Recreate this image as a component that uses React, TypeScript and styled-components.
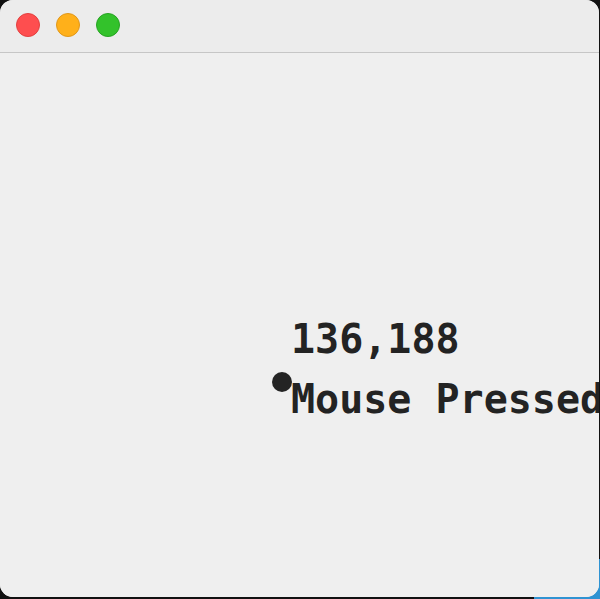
import { FC } from "react";
import { createGlobalStyle, styled } from "styled-components";

const GlobalStyle = createGlobalStyle`
  html, body {
    margin: 0;
    padding: 0;
    height: 100%;
  }
  body {
    background:
      linear-gradient(to right, #111 89%, #2f93d2 89%) bottom / 100% 40px no-repeat,
      #111;
    overflow: hidden;
  }
  #root {
    height: 100%;
  }
`;

const lights = [
  { fill: "#fe4e4f", edge: "#e2403f" },
  { fill: "#ffb01a", edge: "#e0971a" },
  { fill: "#33c22b", edge: "#27a323" },
];

const App: FC = () => {
  const mouse = { x: 282, y: 383 };

  return (
    <>
      <GlobalStyle />
      <Window>
        <TitleBar>
          {lights.map((l) => (
            <Light key={l.fill} $fill={l.fill} $edge={l.edge} />
          ))}
        </TitleBar>
        <Canvas>
          <Cursor style={{ left: mouse.x - 10, top: mouse.y - 10 - 54 }} />
          <Readout style={{ left: mouse.x + 9, top: 310 - 54 }}>
            <Line>136,188</Line>
            <Line>Mouse Pressed</Line>
          </Readout>
        </Canvas>
      </Window>
    </>
  );
};

export default App;

const Window = styled.div`
  width: 599px;
  height: 597px;
  background: #efefef;
  border-radius: 13px;
  overflow: hidden;
  display: flex;
  flex-direction: column;
`;
const TitleBar = styled.div`
  height: 53px;
  flex: none;
  box-sizing: border-box;
  background: #ececec;
  border-bottom: 1px solid #c6c6c6;
  display: flex;
  align-items: flex-start;
  gap: 16px;
  padding: 13px 0 0 16px;
`;
const Light = styled.span<{ $fill: string; $edge: string }>`
  width: 24px;
  height: 24px;
  box-sizing: border-box;
  border-radius: 50%;
  background: ${(p) => p.$fill};
  border: 1px solid ${(p) => p.$edge};
`;
const Canvas = styled.div`
  position: relative;
  flex: 1;
  background: #efefef;
`;
const Cursor = styled.div`
  position: absolute;
  width: 20px;
  height: 20px;
  border-radius: 50%;
  background: #242424;
`;
const Readout = styled.div`
  position: absolute;
  display: flex;
  flex-direction: column;
  white-space: nowrap;
`;
const Line = styled.div`
  font-family: "DejaVu Sans Mono", monospace;
  font-weight: bold;
  font-size: 40px;
  line-height: 60px;
  color: #232323;
`;
